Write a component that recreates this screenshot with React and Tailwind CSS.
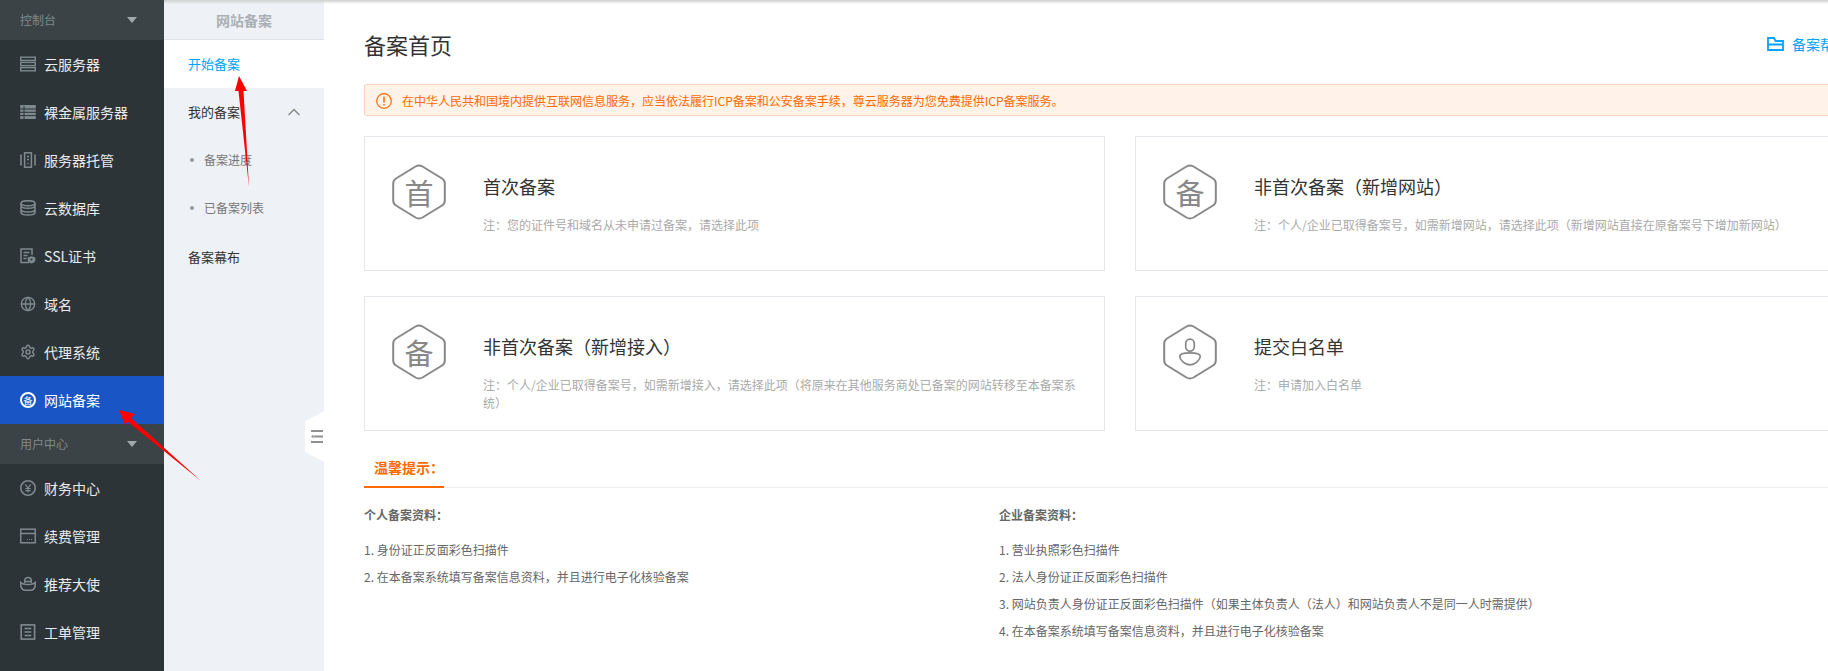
import React from "react";
import { Globe, Settings } from "lucide-react";

const I = ({ children, c = "text-[#7f8a8f]" }) => (
  <svg viewBox="0 0 16 16" className={`w-4 h-4 shrink-0 ${c}`} fill="none" stroke="currentColor" strokeWidth="1.3">{children}</svg>
);

const icons = {
  server: <I><rect x="0.7" y="1.2" width="14.6" height="3.2" strokeWidth="1.4" /><rect x="0.7" y="6.4" width="14.6" height="3.2" strokeWidth="1.4" /><rect x="0.7" y="11.6" width="14.6" height="3.2" strokeWidth="1.4" /></I>,
  metal: <I><rect x="0.2" y="1" width="15.6" height="14" fill="currentColor" stroke="none" /><path d="M0 5h16M0 8.3h16M0 11.6h16M4 2v13" stroke="#2d3437" strokeWidth="1" /></I>,
  host: <I><rect x="4.6" y="0.8" width="6.8" height="14.4" strokeWidth="1.5" /><path d="M1 2.5v11M15 2.5v11M7 4.5h2M7 7.5h2" strokeWidth="1.6" /><circle cx="8" cy="11.5" r="0.8" fill="currentColor" stroke="none" /></I>,
  db: <I><ellipse cx="8" cy="3.2" rx="7" ry="2.5" strokeWidth="1.5" /><path d="M1 3.2v2.6c0 1.4 3.1 2.5 7 2.5s7-1.1 7-2.5V3.2M1 6.500v3c0 1.400 3.100 2.500 7 2.500s7-1.100 7-2.500v-3M1 9.800v2.800c0 1.400 3.100 2.500 7 2.500s7-1.100 7-2.500V9.800" strokeWidth="1.500" /></I>,
  ssl: <I><path d="M9 14.5H1V1h11v6" strokeWidth="1.500" /><path d="M3.500 4.500h6M3.500 7.500h4M3.500 10.500h3" /><path d="M11.500 8.300l3.800 1.200v2.700c0 1.600-1.600 2.700-3.800 3.400-2.200-.7-3.800-1.800-3.800-3.400V9.500z" fill="currentColor" stroke="none" /><circle cx="11.500" cy="11.500" r="1.100" fill="#2d3437" stroke="none" /></I>,
  yen: <I><circle cx="8" cy="8" r="7.200" strokeWidth="1.600" /><path d="M5.300 4.300 8 8l2.700-3.700M5.300 8.500h5.400M5.300 10.700h5.400M8 8v4.500" strokeWidth="1.200" /></I>,
  card: <I><rect x="0.7" y="1.200" width="14.600" height="13.600" strokeWidth="1.500" /><path d="M0.700 5.500h14.600" strokeWidth="1.500" /><path d="M7 11.500h.9M9 11.500h.9M11 11.500h.9" strokeWidth="1.200" /></I>,
  ingot: <I><path d="M4.700 7V4.500C4.700 2.700 6.200 1.500 8 1.500s3.300 1.200 3.300 3V7" strokeWidth="1.500" /><path d="M4.700 5.500H11.300" strokeWidth="1.500" /><path d="M.8 6.500c0 0 2 2 7.200 2s7.200-2 7.200-2c.7 4.500-1.500 7.800-4.200 7.800H5C2.300 14.300.1 11 .8 6.500z" strokeWidth="1.600" /></I>,
  ticket: <I><rect x="1.200" y="0.900" width="13.400" height="14.200" strokeWidth="1.600" /><path d="M4.500 4.500h6.800M4.500 8h6.800M4.500 11.500h6.800" strokeWidth="1.400" /></I>,
};

const Row = ({ icon, label, active }) => (
  <div className={`h-12 flex items-center gap-2 pl-5 text-sm ${active ? "bg-[#1a55c5] text-white" : "text-[#e9ebec]"}`}>
    {icon}
    <span>{label}</span>
  </div>
);

const GroupHead = ({ label }) => (
  <div className="h-10 flex items-center justify-between pl-5 pr-[27px] bg-[#3c4346] text-xs text-[#7f898e]">
    <span>{label}</span>
    <svg viewBox="0 0 10 6" className="w-[10px] h-[6px]"><path d="M0 0h10L5 6z" fill="#a3aaae" /></svg>
  </div>
);

const Hex = ({ children }) => (
  <div className="relative w-[54px] h-[56px] shrink-0 flex items-center justify-center">
    <svg viewBox="0 0 54 56" className="absolute inset-0 w-full h-full" fill="none" stroke="#888" strokeWidth="2">
      <path d="M23.500 2.500 4 14.500Q1.200 16.300 1.200 19.500V36.500Q1.200 39.700 4 41.500L23.500 53.500Q27 55.500 30.500 53.500L50 41.500Q52.800 39.700 52.800 36.500V19.500Q52.800 16.300 50 14.500L30.500 2.500Q27 .5 23.500 2.500Z" />
    </svg>
    {children}
  </div>
);

const Card = ({ hex, title, note }) => (
  <div className="h-[135px] border border-[#e3e6ea] flex pl-[27px] pt-[27px] pr-5">
    <Hex>{hex}</Hex>
    <div className="pl-[37px] pt-[10px] flex-1 min-w-0">
      <div className="text-lg leading-6 text-[#333]">{title}</div>
      <div className="mt-[18px] text-xs leading-[18px] text-[#aaa]">{note}</div>
    </div>
  </div>
);

const Glyph = ({ t }) => <span className="text-[29px] leading-none text-[#888]">{t}</span>;

export default function App() {
  return (
    <div className="relative w-[1828px] h-[671px] overflow-hidden flex bg-white font-['Noto_Sans_CJK_SC','Microsoft_YaHei',sans-serif]">
      <aside className="w-[164px] shrink-0 bg-[#2d3437] flex flex-col">
        <GroupHead label="控制台" />
        <Row icon={icons.server} label="云服务器" />
        <Row icon={icons.metal} label="裸金属服务器" />
        <Row icon={icons.host} label="服务器托管" />
        <Row icon={icons.db} label="云数据库" />
        <Row icon={icons.ssl} label="SSL证书" />
        <Row icon={<Globe size={16} strokeWidth={2} className="shrink-0 text-[#7f8a8f]" />} label="域名" />
        <Row icon={<Settings size={16} strokeWidth={2.200} className="shrink-0 text-[#7f8a8f]" />} label="代理系统" />
        <Row
          active
          label="网站备案"
          icon={
            <span className="w-4 h-4 shrink-0 rounded-full border-2 border-white flex items-center justify-center text-[9px] leading-none text-white">备</span>
          }
        />
        <GroupHead label="用户中心" />
        <Row icon={icons.yen} label="财务中心" />
        <Row icon={icons.card} label="续费管理" />
        <Row icon={icons.ingot} label="推荐大使" />
        <Row icon={icons.ticket} label="工单管理" />
      </aside>

      <nav className="w-[160px] shrink-0 bg-[#eef1f5] flex flex-col text-[13px]">
        <div className="h-10 flex items-center justify-center text-sm font-bold text-[#aab0b5] border-b border-[#dfe3e8]">网站备案</div>
        <div className="h-12 flex items-center pl-6 bg-white text-[#00a4ff]">开始备案</div>
        <div className="h-12 flex items-center justify-between pl-6 pr-6 text-[#333]">
          <span>我的备案</span>
          <svg viewBox="0 0 12 8" className="w-3 h-2" fill="none" stroke="#888" strokeWidth="1.500"><path d="M.5 7 6 1.500 11.500 7" /></svg>
        </div>
        <div className="h-12 flex items-center pl-[26px] gap-[10px] text-xs text-[#777]">
          <span className="w-1 h-1 rounded-full bg-[#999]" />
          <span>备案进度</span>
        </div>
        <div className="h-12 flex items-center pl-[26px] gap-[10px] text-xs text-[#777]">
          <span className="w-1 h-1 rounded-full bg-[#999]" />
          <span>已备案列表</span>
        </div>
        <div className="h-12 flex items-center pl-6 pt-[2px] text-[#333]">备案幕布</div>
      </nav>

      <main className="flex-1 min-w-0 overflow-hidden pl-10">
        <div className="w-[1512px]">
          <header className="h-[84px] pt-[28px] flex justify-between items-start">
            <h1 className="text-[22px] leading-8 text-[#333]">备案首页</h1>
            <div className="flex items-center gap-2 text-sm leading-[20px] text-[#00a4ff] mt-[6px]">
              <svg viewBox="0 0 17 14" className="w-[17px] h-[14px]" fill="none" stroke="currentColor" strokeWidth="1.800">
                <path d="M1 13V1h6l1.500 3H16v9zM1 7.500h15" />
              </svg>
              <span>备案帮助文档</span>
            </div>
          </header>

          <div className="h-8 border border-[#fdd6bd] bg-[#fff2e9] rounded-[2px] flex items-center pl-[11px] pt-[2px] gap-[10px] text-xs text-[#ff6a00]">
            <svg viewBox="0 0 16 16" className="w-4 h-4 shrink-0" fill="none" stroke="currentColor" strokeWidth="1.200">
              <circle cx="8" cy="8" r="7.300" />
              <path d="M8 3.500v6M8 11v1.500" strokeWidth="1.500" />
            </svg>
            <span>在中华人民共和国境内提供互联网信息服务，应当依法履行ICP备案和公安备案手续，尊云服务器为您免费提供ICP备案服务。</span>
          </div>

          <div className="mt-5 grid grid-cols-[741px_741px] gap-x-[30px] gap-y-[25px]">
            <Card hex={<Glyph t="首" />} title="首次备案" note="注：您的证件号和域名从未申请过备案，请选择此项" />
            <Card hex={<Glyph t="备" />} title="非首次备案（新增网站）" note="注：个人/企业已取得备案号，如需新增网站，请选择此项（新增网站直接在原备案号下增加新网站）" />
            <Card hex={<Glyph t="备" />} title="非首次备案（新增接入）" note="注：个人/企业已取得备案号，如需新增接入，请选择此项（将原来在其他服务商处已备案的网站转移至本备案系统）" />
            <Card
              hex={
                <svg viewBox="0 0 28 32" className="w-[24px] h-[30px]" fill="none" stroke="#888" strokeWidth="2">
                  <rect x="9" y="1" width="10" height="14" rx="5" />
                  <path d="M14 17c7 0 12 1.500 12 4 0 4-6 10-12 10S2 25 2 21c0-2.500 5-4 12-4z" />
                </svg>
              }
              title="提交白名单"
              note="注：申请加入白名单"
            />
          </div>

          <div className="mt-[36px] h-[21px] border-b border-[#eceef0]">
            <div className="w-20 h-[21px] border-b-2 border-[#ff6a00] pl-[10px] text-sm font-bold leading-[1px] text-[#ff6a00]">温馨提示：</div>
          </div>

          <div className="grid grid-cols-[635px_1fr] text-xs text-[#666] pt-[18px]">
            <div>
              <div className="font-bold h-[18px] leading-[18px]">个人备案资料：</div>
              <ul className="mt-[17px] flex flex-col">
                <li className="h-[27px] leading-[18px]">1. 身份证正反面彩色扫描件</li>
                <li className="h-[27px] leading-[18px]">2. 在本备案系统填写备案信息资料，并且进行电子化核验备案</li>
              </ul>
            </div>
            <div>
              <div className="font-bold h-[18px] leading-[18px]">企业备案资料：</div>
              <ul className="mt-[17px] flex flex-col">
                <li className="h-[27px] leading-[18px]">1. 营业执照彩色扫描件</li>
                <li className="h-[27px] leading-[18px]">2. 法人身份证正反面彩色扫描件</li>
                <li className="h-[27px] leading-[18px]">3. 网站负责人身份证正反面彩色扫描件（如果主体负责人（法人）和网站负责人不是同一人时需提供）</li>
                <li className="h-[27px] leading-[18px]">4. 在本备案系统填写备案信息资料，并且进行电子化核验备案</li>
              </ul>
            </div>
          </div>
        </div>
      </main>

      {/* collapse handle overlapping the panel edge */}
      <div className="absolute left-[305px] top-[411px] w-[19px] h-[51px] bg-white [clip-path:polygon(100%_0,0_20%,0_80%,100%_100%)]" />
      <svg viewBox="0 0 12 13" className="absolute left-[311px] top-[430px] w-3 h-[13px]" fill="#8f8f8f">
        <path d="M0 0h12v2H0zM3 5.500h9v2H3zM0 11h12v2H0zM2.500 4.500v4L0 6.500z" />
      </svg>

      {/* top shadow of the cropped top bar */}
      <div className="absolute top-0 left-[164px] right-0 h-1 bg-gradient-to-b from-[#cfcfcf] to-transparent" />

      {/* red annotation arrows */}
      <svg className="absolute inset-0 w-full h-full pointer-events-none" viewBox="0 0 1828 671">
        <polygon points="239,76 247,91 243.500,91 249,187 238.500,91 235,91" fill="#fe0000" />
        <polygon points="119,410 135,414 131,418 201,481 127.500,421.500 125,425" fill="#fe0000" />
      </svg>
    </div>
  );
}
